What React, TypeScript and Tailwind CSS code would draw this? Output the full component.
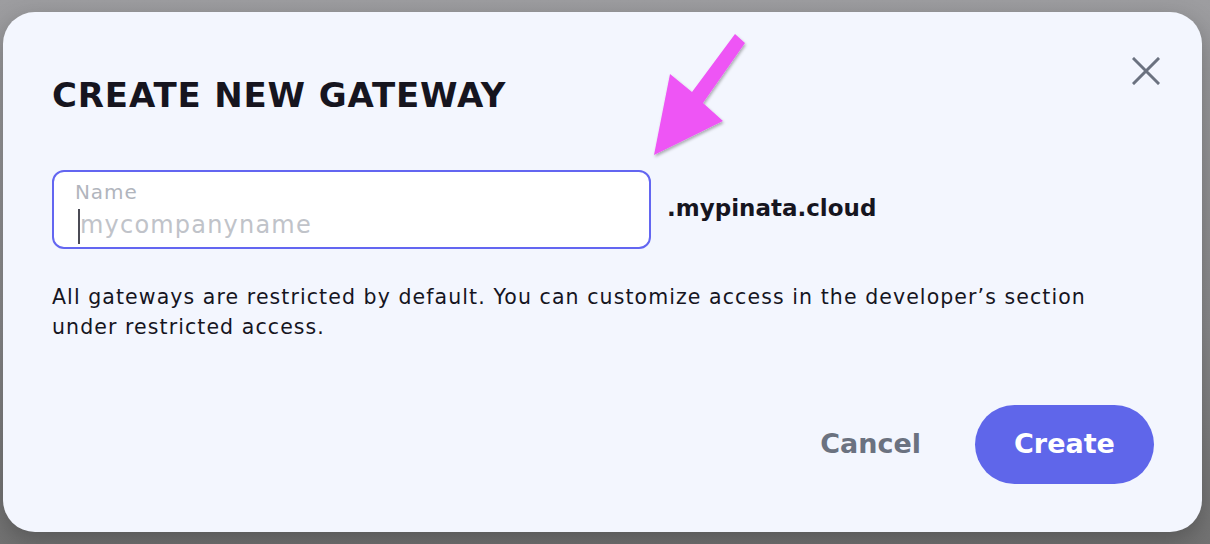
import React from "react";

export default function App() {
  return (
    <div className="relative w-[1210px] h-[544px] overflow-hidden bg-[linear-gradient(to_bottom,#9d9da0,#8a8a8c_60%,#727272)] pt-[12px] pl-[3px]" style={{ fontFamily: "'DejaVu Sans', Inter, sans-serif" }}>
      <div className="relative w-[1199px] h-[520px] rounded-[32px] bg-[#f3f6fe] shadow-[0_8px_24px_rgba(0,0,0,0.25)] pl-[49px] pr-[48px] pt-[63px]">
        <div className="flex items-start justify-between">
          <h1 className="text-[34px] leading-[40px] font-bold tracking-[0.85px] text-[#16151f]">
            CREATE NEW GATEWAY
          </h1>
          <button className="mt-[-24px] mr-[-12px] w-[40px] h-[40px] flex items-center justify-center text-[#6b7280]">
            <svg width="28" height="28" viewBox="0 0 28 28" fill="none" stroke="currentColor" strokeWidth="3" strokeLinecap="square">
              <path d="M2 2L26 26M26 2L2 26" />
            </svg>
          </button>
        </div>
        <div className="mt-[55px] flex items-center gap-[16px]">
          <div className="w-[599px] h-[79px] rounded-[12px] border-2 border-[#6366f1] bg-white pl-[21px] pt-[9px]">
            <div className="text-[20px] leading-[22px] tracking-[0.9px] text-[#b1b5bd]">Name</div>
            <div className="relative flex items-center h-[40px] mt-[2px]">
              <span className="absolute left-[3px] top-[4px] w-[2px] h-[35px] bg-[#4b4b55]" />
              <span className="pl-[5px] text-[24px] leading-[30px] tracking-[1.2px] text-[#c0c3c9]">mycompanyname</span>
            </div>
          </div>
          <div className="text-[23px] font-bold text-[#16151f] mt-[-2px]">.mypinata.cloud</div>
        </div>
        <p className="mt-[33px] text-[20.5px] leading-[30px] tracking-[1.08px] text-[#16151f]">
          All gateways are restricted by default. You can customize access in the developer’s section
          <br />
          under restricted access.
        </p>
        <div className="mt-[63px] flex items-center justify-end gap-[54px]">
          <button className="text-[27px] font-bold text-[#6b7280]">Cancel</button>
          <button className="w-[179px] h-[79px] rounded-full bg-[#5f66ea] text-[27px] font-bold text-white">Create</button>
        </div>
      </div>
      <svg className="absolute left-0 top-0 pointer-events-none" width="1210" height="544" viewBox="0 0 1210 544">
        <defs>
          <filter id="sh" x="-20%" y="-20%" width="140%" height="140%">
            <feDropShadow dx="1" dy="2" stdDeviation="1.5" floodColor="#000" floodOpacity="0.3" />
          </filter>
        </defs>
        <polygon points="654,155 670,74 692,92 735,34 745,43 703,103 723,121" fill="#ee55f5" filter="url(#sh)" />
      </svg>
    </div>
  );
}
